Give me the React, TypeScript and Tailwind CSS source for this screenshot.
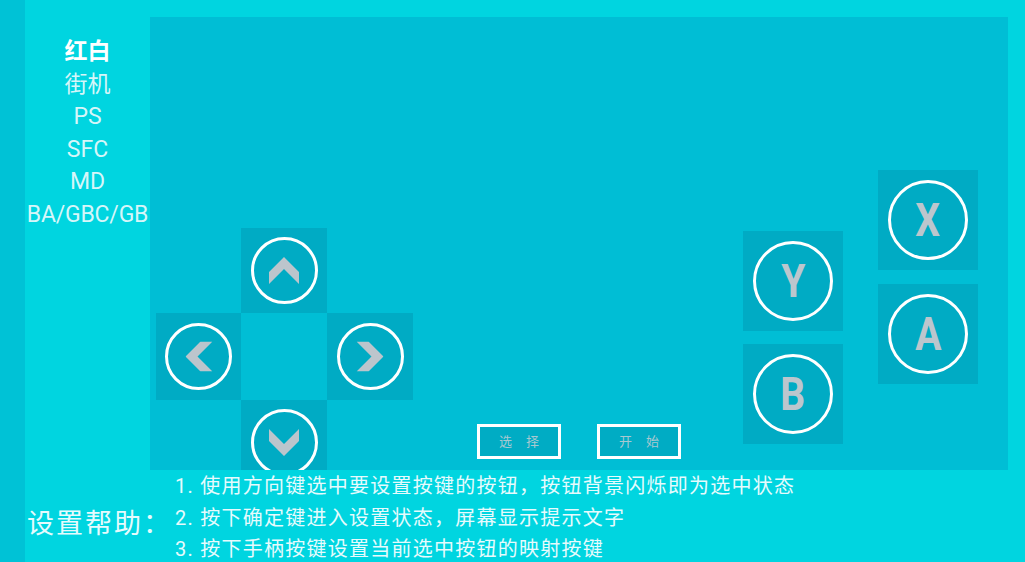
import React from "react";

const FONT = { fontFamily: "Roboto, 'Noto Sans CJK SC', sans-serif" };

function Chevron({ rot }: { rot: string }) {
  return (
    <svg width="30" height="27" viewBox="0 0 30 27" className={rot}>
      <polygon points="15,0 30,15 30,27 15,12 0,27 0,15" fill="#bcc5cc" />
    </svg>
  );
}

function DCell({ rot }: { rot: string }) {
  return (
    <div className="bg-[#00abc4] flex items-start justify-center pt-[9px]">
      <div className="w-[67px] h-[67px] rounded-full border-[3px] border-white flex items-center justify-center">
        <Chevron rot={rot} />
      </div>
    </div>
  );
}

function Face({ label }: { label: string }) {
  return (
    <div className="w-[100px] h-[100px] bg-[#00abc4] flex items-center justify-center">
      <div className="w-[80px] h-[80px] rounded-full border-[3px] border-white flex items-center justify-center">
        <span className="text-[46px] font-bold leading-none text-[#bcc6cd] scale-x-85 inline-block">
          {label}
        </span>
      </div>
    </div>
  );
}

function SmallBtn({ text }: { text: string }) {
  return (
    <div className="w-[84px] h-[35px] border-[3px] border-white bg-[#00acc4] flex items-center justify-center text-[13px] text-[#a9c8d0] tracking-[14px] pl-[14px]">
      {text}
    </div>
  );
}

export default function App() {
  const items = ["红白", "街机", "PS", "SFC", "MD", "BA/GBC/GB"];
  return (
    <div
      className="w-[1025px] h-[562px] flex bg-[#00d5e0] overflow-hidden"
      style={FONT}
    >
      <div className="w-[25px] shrink-0 bg-[#00c2d6]" />
      <div className="flex-1 flex flex-col min-w-0">
        <div className="h-[17px] shrink-0" />
        <div className="h-[453px] shrink-0 flex">
          <div className="w-[125px] shrink-0 overflow-hidden pt-[19px] flex flex-col">
            {items.map((t, i) => (
              <div
                key={t}
                className={`flex justify-center whitespace-nowrap leading-[32.5px] ${
                  i === 0
                    ? "text-white font-bold text-[23px]"
                    : i === 5
                    ? "text-[#d6f6f9] text-[23px] tracking-[-0.2px]"
                    : "text-[#d6f6f9] text-[23px]"
                }`}
              >
                {t}
              </div>
            ))}
          </div>
          <div className="w-[858px] shrink-0 h-full bg-[#00bed5] overflow-hidden flex items-start">
            <div className="ml-[6px] mt-[211px] grid grid-cols-[85px_86px_86px] grid-rows-[85px_87px_87px] shrink-0">
              <div />
              <DCell rot="" />
              <div />
              <div className="bg-[#00abc4] flex items-center justify-center">
                <div className="w-[67px] h-[67px] rounded-full border-[3px] border-white flex items-center justify-center">
                  <Chevron rot="-rotate-90" />
                </div>
              </div>
              <div />
              <div className="bg-[#00abc4] flex items-center justify-center">
                <div className="w-[67px] h-[67px] rounded-full border-[3px] border-white flex items-center justify-center">
                  <Chevron rot="rotate-90" />
                </div>
              </div>
              <div />
              <DCell rot="rotate-180" />
              <div />
            </div>
            <div className="ml-[64px] mt-[407px] flex gap-[36px] shrink-0">
              <SmallBtn text="选择" />
              <SmallBtn text="开始" />
            </div>
            <div className="ml-[62px] mt-[214px] flex flex-col gap-[13px] shrink-0">
              <Face label="Y" />
              <Face label="B" />
            </div>
            <div className="ml-[35px] mt-[153px] flex flex-col gap-[14px] shrink-0">
              <Face label="X" />
              <Face label="A" />
            </div>
          </div>
        </div>
        <div className="flex-1 flex pl-[2px] overflow-hidden">
          <div className="w-[148px] shrink-0 mt-[36px] text-[27px] leading-[36px] tracking-[2px] text-[#e6fbfd] whitespace-nowrap">
            设置帮助：
          </div>
          <div className="pt-[1px] text-[20px] leading-[31.5px] tracking-[1.25px] text-[#e6fbfd] whitespace-nowrap">
            <div>1. 使用方向键选中要设置按键的按钮，按钮背景闪烁即为选中状态</div>
            <div>2. 按下确定键进入设置状态，屏幕显示提示文字</div>
            <div>3. 按下手柄按键设置当前选中按钮的映射按键</div>
          </div>
        </div>
      </div>
    </div>
  );
}
